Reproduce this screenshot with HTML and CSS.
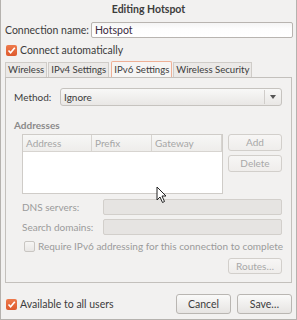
FILE: index.html
```html
<!DOCTYPE html>
<html>
<head>
<meta charset="utf-8">
<link rel="stylesheet" href="styles.css">
</head>
<body>
<div class="window">
  <div class="title">Editing Hotspot</div>
  <div class="name-row">
    <span class="label">Connection name:</span>
    <div class="entry name-entry">Hotspot</div>
  </div>
  <div class="check-row top-check">
    <span class="check on"><svg viewBox="0 0 11 11" width="11" height="11"><path d="M2.5 5.5 L4.6 7.8 L8.8 2.8" fill="none" stroke="#fff" stroke-width="1.6"/></svg></span>
    <span>Connect automatically</span>
  </div>
  <div class="tabs">
    <div class="tab">Wireless</div>
    <div class="tab">IPv4 Settings</div>
    <div class="tab active">IPv6 Settings</div>
    <div class="tab">Wireless Security</div>
  </div>
  <div class="panel">
    <div class="method-row">
      <span class="label">Method:</span>
      <div class="combo"><span>Ignore</span><span class="combo-sep"></span><span class="arrow"></span></div>
    </div>
    <div class="section-title">Addresses</div>
    <div class="addr-row">
      <div class="table">
        <div class="thead">
          <div class="th c1">Address</div>
          <div class="th c2">Prefix</div>
          <div class="th c3">Gateway</div>
        </div>
        <div class="tbody"></div>
      </div>
      <div class="side-buttons">
        <div class="button disabled">Add</div>
        <div class="button disabled">Delete</div>
      </div>
    </div>
    <div class="field-row dns">
      <span class="label dis">DNS servers:</span>
      <div class="entry disabled-entry"></div>
    </div>
    <div class="field-row search">
      <span class="label dis">Search domains:</span>
      <div class="entry disabled-entry"></div>
    </div>
    <div class="check-row req">
      <span class="check off"></span>
      <span class="dis">Require IPv6 addressing for this connection to complete</span>
    </div>
    <div class="routes-row">
      <div class="button disabled routes">Routes…</div>
    </div>
  </div>
  <div class="footer">
    <div class="check-row">
      <span class="check on"><svg viewBox="0 0 11 11" width="11" height="11"><path d="M2.5 5.5 L4.6 7.8 L8.8 2.8" fill="none" stroke="#fff" stroke-width="1.6"/></svg></span>
      <span>Available to all users</span>
    </div>
    <div class="footer-buttons">
      <div class="button">Cancel</div>
      <div class="button">Save…</div>
    </div>
  </div>
  <svg class="cursor" width="12" height="18" viewBox="0 0 12 18"><path d="M1 1 L1 14 L4 11 L6.5 16.5 L8.5 15.5 L6 10 L10 10 Z" fill="#fff" stroke="#222" stroke-width="1"/></svg>
</div>
</body>
</html>
```

FILE: styles.css
```css
* { box-sizing: border-box; }
html, body { margin: 0; padding: 0; }
body {
  font-family: "Lato", "Open Sans", sans-serif;
  font-size: 10px;
  color: #3c3c3c;
  background: #f2f1f0;
  white-space: nowrap;
}
.window {
  position: relative;
  width: 297px;
  height: 320px;
  background: #f2f1f0;
  border-left: 1px solid #b5b2ae;
  border-right: 1px solid #b5b2ae;
  border-bottom: 1px solid #b5b2ae;
  display: flex;
  flex-direction: column;
  padding: 0 3px 0 3px;
}
.title {
  text-align: center;
  font-weight: bold;
  font-size: 10.5px;
  height: 19px;
  line-height: 19px;
  color: #3c3c3c;
}
.name-row {
  display: flex;
  align-items: center;
  height: 16px;
  margin-top: 3px;
  font-size: 10.5px;
}
.name-row .label { width: 87px; flex: none; padding-left: 1px; }
.entry {
  height: 16px;
  border: 1px solid #b8b4b0;
  border-radius: 2px;
  background: linear-gradient(#f4f4f4, #fdfdfd 40%, #fff);
  line-height: 14px;
  padding-left: 3px;
}
.name-entry { flex: 1; color: #3a2a40; }
.check-row {
  display: flex;
  align-items: center;
  gap: 3px;
}
.top-check { margin-top: 5px; padding-left: 2px; height: 14px; font-size: 10.5px; }
.check {
  width: 11px;
  height: 11px;
  border-radius: 2px;
  display: inline-block;
  flex: none;
}
.check svg { display: block; }
.check.on {
  background: linear-gradient(#ee7a4c, #dd5a2e);
  border: none;
}
.check.off {
  border: 1px solid #c9c6c2;
  background: linear-gradient(#f6f5f4, #e9e7e5);
}
.tabs {
  display: flex;
  margin-top: 4px;
  height: 16px;
  align-items: flex-end;
  padding-left: 1px;
}
.tab {
  height: 15px;
  line-height: 14px;
  padding: 0 2px;
  font-size: 9.6px;
  border: 1px solid #cfccc8;
  border-bottom: none;
  background: #ebe9e7;
  margin-right: 1px;
  color: #3c3c3c;
}
.tab.active {
  height: 16px;
  line-height: 15px;
  border-color: #efb096;
  background: #f6f5f4;
  border-radius: 2px 2px 0 0;
  margin: 0 1px 0 1px;
}
.panel {
  height: 206px;
  border: 1px solid #c3c0bc;
  margin-left: 1px;
  margin-right: 1px;
  padding: 10px 9px 0 8px;
  display: flex;
  flex-direction: column;
}
.method-row {
  display: flex;
  align-items: center;
  height: 18px;
}
.method-row .label { width: 46px; flex: none; }
.combo {
  flex: 1;
  height: 18px;
  border: 1px solid #c6c3bf;
  border-radius: 3px;
  background: linear-gradient(#f8f8f7, #e9e7e5);
  display: flex;
  align-items: center;
  padding-left: 3px;
}
.combo span:first-child { flex: 1; }
.combo-sep {
  width: 1px;
  height: 14px;
  background: #d0cdca;
  margin-right: 5px;
}
.arrow {
  width: 0; height: 0;
  border-left: 3.5px solid transparent;
  border-right: 3.5px solid transparent;
  border-top: 4px solid #555;
  margin-right: 5px;
}
.section-title {
  margin-top: 13px;
  font-weight: bold;
  color: #8a8a8a;
  height: 12px;
  line-height: 12px;
}
.addr-row {
  display: flex;
  margin-top: 3px;
  padding-left: 8px;
  gap: 5px;
}
.table {
  width: 201px;
  height: 60px;
  border: 1px solid #cfccc8;
  background: #fff;
  display: flex;
  flex-direction: column;
}
.thead {
  display: flex;
  height: 17px;
  border-bottom: 1px solid #d7d4d0;
  background: linear-gradient(#f7f7f6, #eeedeb);
}
.th {
  color: #a6a6a6;
  line-height: 16px;
  padding-left: 3px;
  border-right: 1px solid #d7d4d0;
}
.c1 { width: 69px; }
.c2 { width: 60px; }
.c3 { flex: 1; }
.side-buttons {
  display: flex;
  flex-direction: column;
  gap: 4px;
  width: 54px;
}
.button {
  height: 17px;
  border: 1px solid #b9b6b2;
  border-radius: 3px;
  background: linear-gradient(#fafaf9, #e6e4e2);
  text-align: center;
  line-height: 15px;
  color: #3c3c3c;
}
.button.disabled {
  color: #a8a8a8;
  border-color: #d2cfcb;
  background: linear-gradient(#f7f6f5, #efedeb);
}
.field-row {
  display: flex;
  align-items: center;
  padding-left: 8px;
  height: 16px;
}
.field-row .label { width: 81px; flex: none; }
.field-row .entry { flex: 1; }
.dns { margin-top: 5px; }
.search { margin-top: 4px; }
.disabled-entry {
  background: #e6e4e2;
  border-color: #d2cfcb;
}
.dis { color: #9b9b9b; }
.req { margin-top: 4px; padding-left: 10px; height: 14px; gap: 3px; }
.routes-row {
  display: flex;
  justify-content: flex-end;
  margin-top: 5px;
}
.routes { width: 54px; height: 16px; line-height: 14px; }
.footer {
  display: flex;
  align-items: center;
  justify-content: space-between;
  margin-top: 11px;
  padding-left: 2px;
  font-size: 10.5px;
}
.footer-buttons {
  display: flex;
  gap: 6px;
  padding-right: 1px;
}
.footer-buttons .button {
  width: 55px;
  height: 20px;
  line-height: 18px;
}
.cursor {
  position: absolute;
  left: 155px;
  top: 186px;
}
```
